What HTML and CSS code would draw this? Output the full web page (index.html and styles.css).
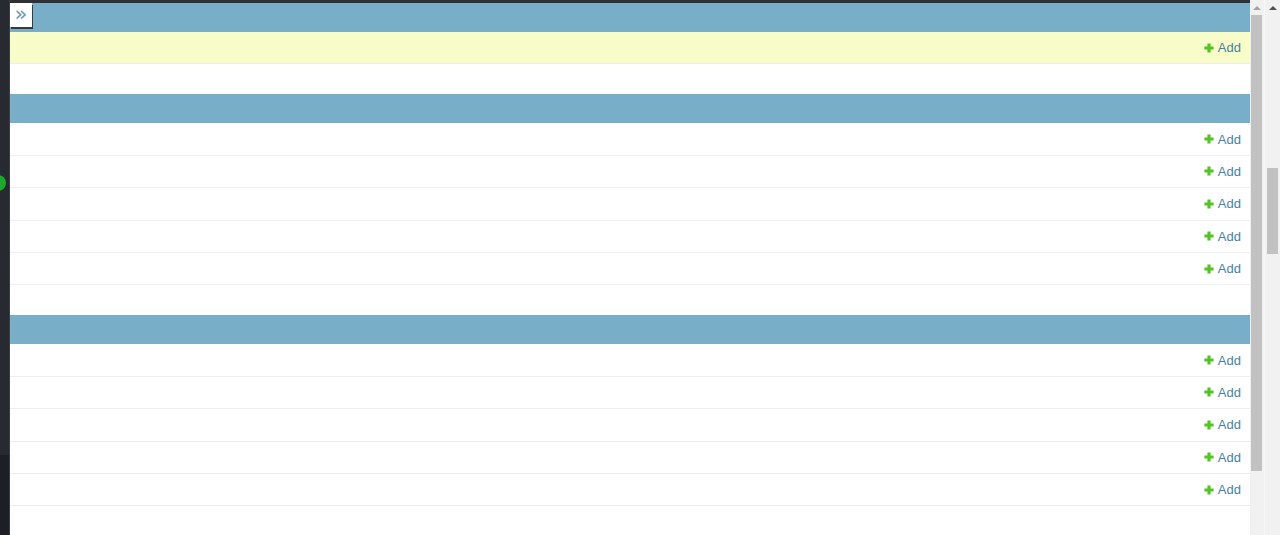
FILE: index.html
```html
<!DOCTYPE html>
<html lang="en">
<head>
<meta charset="utf-8">
<title>Site administration</title>
<link rel="stylesheet" href="styles.css">
</head>
<body>
<div class="page">
  <div class="frame">
    <div class="topline"></div>
    <div class="main">
      <div class="navstrip"><span class="dot"></span><div class="navstrip-low"></div></div>
      <div class="content">
        <button class="toggle-nav" type="button">»</button>
        <div class="module">
          <div class="caption"></div>
          <div class="row current"><a class="addlink" href="#"><svg class="plus" viewBox="0 0 10 10"><path d="M3.4 0.4h3.2v3h3v3.2h-3v3h-3.2v-3h-3v-3.2h3z"/></svg>Add</a></div>
        </div>
        <div class="module">
          <div class="caption"></div>
          <div class="row"><a class="addlink" href="#"><svg class="plus" viewBox="0 0 10 10"><path d="M3.4 0.4h3.2v3h3v3.2h-3v3h-3.2v-3h-3v-3.2h3z"/></svg>Add</a></div>
          <div class="row"><a class="addlink" href="#"><svg class="plus" viewBox="0 0 10 10"><path d="M3.4 0.4h3.2v3h3v3.2h-3v3h-3.2v-3h-3v-3.2h3z"/></svg>Add</a></div>
          <div class="row"><a class="addlink" href="#"><svg class="plus" viewBox="0 0 10 10"><path d="M3.4 0.4h3.2v3h3v3.2h-3v3h-3.2v-3h-3v-3.2h3z"/></svg>Add</a></div>
          <div class="row"><a class="addlink" href="#"><svg class="plus" viewBox="0 0 10 10"><path d="M3.4 0.4h3.2v3h3v3.2h-3v3h-3.2v-3h-3v-3.2h3z"/></svg>Add</a></div>
          <div class="row"><a class="addlink" href="#"><svg class="plus" viewBox="0 0 10 10"><path d="M3.4 0.4h3.2v3h3v3.2h-3v3h-3.2v-3h-3v-3.2h3z"/></svg>Add</a></div>
        </div>
        <div class="module">
          <div class="caption"></div>
          <div class="row"><a class="addlink" href="#"><svg class="plus" viewBox="0 0 10 10"><path d="M3.4 0.4h3.2v3h3v3.2h-3v3h-3.2v-3h-3v-3.2h3z"/></svg>Add</a></div>
          <div class="row"><a class="addlink" href="#"><svg class="plus" viewBox="0 0 10 10"><path d="M3.4 0.4h3.2v3h3v3.2h-3v3h-3.2v-3h-3v-3.2h3z"/></svg>Add</a></div>
          <div class="row"><a class="addlink" href="#"><svg class="plus" viewBox="0 0 10 10"><path d="M3.4 0.4h3.2v3h3v3.2h-3v3h-3.2v-3h-3v-3.2h3z"/></svg>Add</a></div>
          <div class="row"><a class="addlink" href="#"><svg class="plus" viewBox="0 0 10 10"><path d="M3.4 0.4h3.2v3h3v3.2h-3v3h-3.2v-3h-3v-3.2h3z"/></svg>Add</a></div>
          <div class="row"><a class="addlink" href="#"><svg class="plus" viewBox="0 0 10 10"><path d="M3.4 0.4h3.2v3h3v3.2h-3v3h-3.2v-3h-3v-3.2h3z"/></svg>Add</a></div>
        </div>
      </div>
      <div class="scrollbar inner">
        <div class="arrow"></div>
        <div class="thumb"></div>
      </div>
    </div>
  </div>
  <div class="scrollbar outer">
    <div class="arrow"></div>
    <div class="thumb"></div>
  </div>
</div>
</body>
</html>
```

FILE: styles.css
```css
* { box-sizing: border-box; }
html, body { margin: 0; padding: 0; }
body {
  font-family: "Liberation Sans", Arial, sans-serif;
  font-size: 13px;
  background: #fff;
  overflow: hidden;
}
.page {
  display: flex;
  height: 535px;
  width: 1280px;
}
.frame {
  flex: 1;
  display: flex;
  flex-direction: column;
  min-width: 0;
  position: relative;
}
.topline {
  height: 3px;
  background: #2e3033;
  margin-right: 15px;
}
.main {
  flex: 1;
  display: flex;
  min-height: 0;
}
.navstrip {
  width: 10px;
  background: #272b31;
  border-right: 1px solid #3a3d42;
  display: flex;
  flex-direction: column;
  margin-top: -3px;
}
.navstrip-low {
  margin-top: auto;
  height: 80px;
  background: #1c1f26;
}
.dot {
  position: absolute;
  left: -10px;
  top: 175px;
  width: 16px;
  height: 16px;
  border-radius: 50%;
  background: #1ea82b;
}
.content {
  flex: 1;
  position: relative;
  min-width: 0;
}
.toggle-nav {
  position: absolute;
  left: 0;
  top: 0;
  width: 22px;
  height: 24px;
  padding: 0 0 2px 0;
  border: 0;
  background: #fff;
  box-shadow: 1px 2px 0 #3a3a3a;
  color: #6a98bd;
  font-family: "DejaVu Sans", sans-serif;
  font-size: 21px;
  line-height: 22px;
  text-align: center;
  z-index: 2;
}
.module {
  margin-bottom: 30px;
}
.caption {
  height: 29px;
  background: #79aec8;
}
.row {
  height: 32.4px;
  border-bottom: 1px solid #eeeeee;
  display: flex;
  align-items: center;
  justify-content: flex-end;
  padding-right: 9px;
}
.row.current {
  background: #f8fcc8;
}
.addlink {
  color: #4a80a0;
  text-decoration: none;
  display: flex;
  align-items: center;
  gap: 4px;
  font-size: 13px;
}
.plus {
  width: 10px;
  height: 10px;
  fill: #56c228;
}
.scrollbar {
  width: 15px;
  background: #f1f1f1;
  display: flex;
  flex-direction: column;
  align-items: center;
}
.scrollbar.inner {
  margin-top: -3px;
  border-right: 1px solid #f7f7f7;
}
.arrow {
  margin-top: 6px;
  width: 0;
  height: 0;
  border-left: 4px solid transparent;
  border-right: 4px solid transparent;
  border-bottom: 4px solid #a3a3a3;
}
.outer .arrow {
  border-bottom-color: #505050;
}
.scrollbar.inner .thumb {
  margin-top: 5px;
  width: 11px;
  height: 456px;
  background: #c1c1c1;
  margin-left: -1px;
}
.scrollbar.outer .thumb {
  margin-top: 158px;
  width: 11px;
  height: 86px;
  background: #c1c1c1;
}
```
